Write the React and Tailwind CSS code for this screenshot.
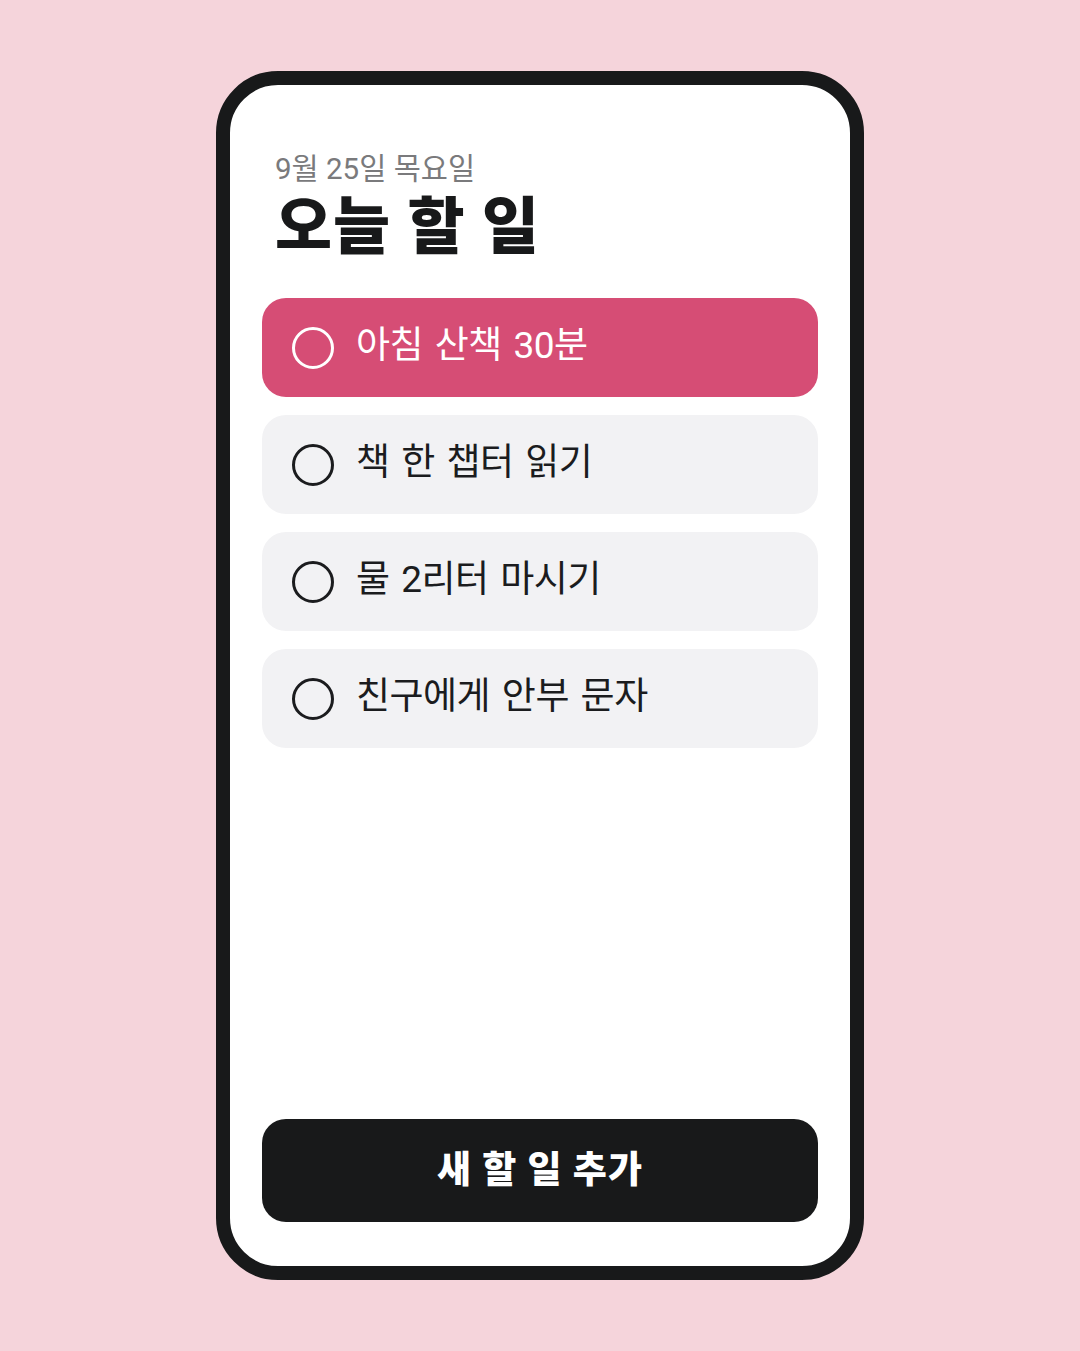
import { useState } from "react"

const tasks = [
  { id: 1, label: "아침 산책 30분", active: true },
  { id: 2, label: "책 한 챕터 읽기" },
  { id: 3, label: "물 2리터 마시기" },
  { id: 4, label: "친구에게 안부 문자" },
]

function TaskItem({ label, active }) {
  return (
    <li
      className={
        active
          ? "flex h-[99px] items-center gap-[22px] rounded-[24px] bg-[#d64d75] px-[30px] text-white"
          : "flex h-[99px] items-center gap-[22px] rounded-[24px] bg-[#f2f2f4] px-[30px] text-[#1b1c1e]"
      }
    >
      <span
        className={
          active
            ? "h-[42px] w-[42px] shrink-0 rounded-full border-[3px] border-white"
            : "h-[42px] w-[42px] shrink-0 rounded-full border-[3px] border-[#1b1c1e]"
        }
      />
      <span className="pb-[4px] text-[37px] leading-none tracking-[-0.5px] [word-spacing:3px]">{label}</span>
    </li>
  )
}

export default function App() {
  const [items] = useState(tasks)

  return (
    <div
      className="flex h-[1351px] w-full items-center justify-center bg-[#f5d4db]"
      style={{ fontFamily: 'Roboto, "Noto Sans CJK KR", sans-serif' }}
    >
      <div className="flex h-[1209px] w-[648px] flex-col rounded-[62px] border-[14px] border-[#18191a] bg-white px-[32px] pb-[44px] pt-[68px]">
        <div className="px-[13px]">
          <p className="text-[29.5px] leading-[32px] text-[#7a7a7c]">9월 25일 목요일</p>
          <h1 className="mt-[10px] text-[62px] font-black leading-[66px] tracking-[1px] text-[#18191a]">
            오늘 할 일
          </h1>
        </div>

        <ul className="mt-[37px] flex flex-col gap-[18px]">
          {items.map((t) => (
            <TaskItem key={t.id} {...t} />
          ))}
        </ul>

        <button className="mt-auto h-[103px] w-full rounded-[24px] bg-[#18191a] text-[37px] font-black tracking-[1px] text-white">
          새 할 일 추가
        </button>
      </div>
    </div>
  )
}
